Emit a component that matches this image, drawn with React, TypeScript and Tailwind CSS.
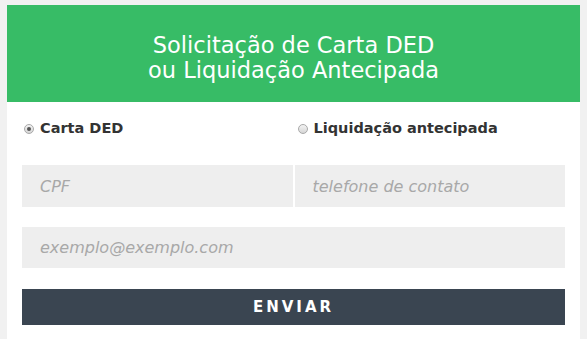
import React, { useState } from 'react';

const Radio: React.FC<{ checked: boolean }> = ({ checked }) => (
  <span className="w-[10px] h-[10px] rounded-full border border-[#a9a9a9] bg-gradient-to-b from-[#f3f3f3] to-[#d6d6d6] flex items-center justify-center shrink-0">
    {checked && <span className="w-[4px] h-[4px] rounded-full bg-[#555]" />}
  </span>
);

const App: React.FC = () => {
  const [tipo, setTipo] = useState<'carta' | 'liquidacao'>('carta');

  return (
    <div className="min-h-[339px] bg-[#f1f1f1] pl-[7px] pr-[7px] pt-[5px]" style={{ fontFamily: '"DejaVu Sans", sans-serif' }}>
      <div className="bg-white h-[334px]">
        <div className="bg-[#37bc66] h-[97px] flex items-center justify-center pt-[9px]">
          <h2 className="text-white text-[22.5px] leading-[25px] text-center">
            Solicitação de Carta DED<br />ou Liquidação Antecipada
          </h2>
        </div>
        <form className="px-[15px]" onSubmit={e => e.preventDefault()}>
          <div className="grid grid-cols-2 h-[52px] items-center pt-[1px]">
            <label className="flex items-center gap-[6px] pl-[2px] text-[14.5px] font-semibold text-[#333] cursor-pointer" onClick={() => setTipo('carta')}>
              <Radio checked={tipo === 'carta'} />
              Carta DED
            </label>
            <label className="flex items-center gap-[6px] pl-[4px] text-[14.5px] font-semibold text-[#333] cursor-pointer" onClick={() => setTipo('liquidacao')}>
              <Radio checked={tipo === 'liquidacao'} />
              Liquidação antecipada
            </label>
          </div>
          <div className="grid grid-cols-2 gap-[2px] mt-[11px]">
            <input placeholder="CPF" className="h-[42px] bg-[#eeeeee] px-[18px] text-[16px] italic placeholder-[#a8a8a8] outline-none" />
            <input placeholder="telefone de contato" className="h-[42px] bg-[#eeeeee] px-[18px] text-[16px] italic placeholder-[#a8a8a8] outline-none" />
          </div>
          <input placeholder="exemplo@exemplo.com" className="mt-[20px] w-full h-[41px] bg-[#eeeeee] px-[18px] text-[16px] italic placeholder-[#a8a8a8] outline-none" />
          <button type="submit" className="mt-[21px] w-full h-[36px] bg-[#3a4551] text-white text-[15px] font-bold tracking-[3px]">
            ENVIAR
          </button>
        </form>
      </div>
    </div>
  );
};

export default App;
